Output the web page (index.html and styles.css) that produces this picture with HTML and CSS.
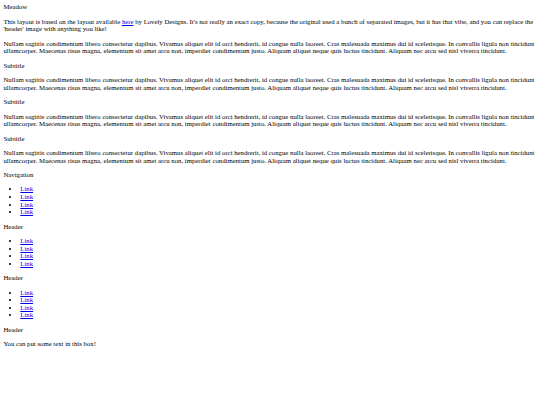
FILE: index.html
```html
<!DOCTYPE html>
<html>
<head>
<meta charset="utf-8">
<title>Meadow</title>
<link rel="stylesheet" href="styles.css">
</head>
<body>
<div class="site-title">Meadow</div>
<p>This layout is based on the layout available <a href="#">here</a> by Lovely Designs. It's not really an exact copy, because the original used a bunch of separated images, but it has that vibe, and you can replace the 'header' image with anything you like!</p>
<p>Nullam sagittis condimentum libero consectetur dapibus. Vivamus aliquet elit id orci hendrerit, id congue nulla laoreet. Cras malesuada maximus dui id scelerisque. In convallis ligula non tincidunt ullamcorper. Maecenas risus magna, elementum sit amet arcu non, imperdiet condimentum justo. Aliquam aliquet neque quis luctus tincidunt. Aliquam nec arcu sed nisl viverra tincidunt.</p>
<p class="subtitle">Subtitle</p>
<p>Nullam sagittis condimentum libero consectetur dapibus. Vivamus aliquet elit id orci hendrerit, id congue nulla laoreet. Cras malesuada maximus dui id scelerisque. In convallis ligula non tincidunt ullamcorper. Maecenas risus magna, elementum sit amet arcu non, imperdiet condimentum justo. Aliquam aliquet neque quis luctus tincidunt. Aliquam nec arcu sed nisl viverra tincidunt.</p>
<p class="subtitle">Subtitle</p>
<p>Nullam sagittis condimentum libero consectetur dapibus. Vivamus aliquet elit id orci hendrerit, id congue nulla laoreet. Cras malesuada maximus dui id scelerisque. In convallis ligula non tincidunt ullamcorper. Maecenas risus magna, elementum sit amet arcu non, imperdiet condimentum justo. Aliquam aliquet neque quis luctus tincidunt. Aliquam nec arcu sed nisl viverra tincidunt.</p>
<p class="subtitle">Subtitle</p>
<p>Nullam sagittis condimentum libero consectetur dapibus. Vivamus aliquet elit id orci hendrerit, id congue nulla laoreet. Cras malesuada maximus dui id scelerisque. In convallis ligula non tincidunt ullamcorper. Maecenas risus magna, elementum sit amet arcu non, imperdiet condimentum justo. Aliquam aliquet neque quis luctus tincidunt. Aliquam nec arcu sed nisl viverra tincidunt.</p>
<div class="box-title">Navigation</div>
<ul class="links">
<li><a href="#">Link</a></li>
<li><a href="#">Link</a></li>
<li><a href="#">Link</a></li>
<li><a href="#">Link</a></li>
</ul>
<div class="box-title">Header</div>
<ul class="links">
<li><a href="#">Link</a></li>
<li><a href="#">Link</a></li>
<li><a href="#">Link</a></li>
<li><a href="#">Link</a></li>
</ul>
<div class="box-title">Header</div>
<ul class="links">
<li><a href="#">Link</a></li>
<li><a href="#">Link</a></li>
<li><a href="#">Link</a></li>
<li><a href="#">Link</a></li>
</ul>
<div class="box-title">Header</div>
<p>You can put some text in this box!</p>
</body>
</html>
```
FILE: styles.css
```css
body {
  margin: 3.4px;
  font-family: "Liberation Serif", "Times New Roman", serif;
  font-size: 6.75px;
  line-height: 7.63px;
  color: #000;
  background: #fff;
}
p {
  margin: 6.75px 0;
}
a {
  color: #0000ee;
}
.links {
  margin: 6.75px 0;
  padding-left: 16.9px;
}
```
